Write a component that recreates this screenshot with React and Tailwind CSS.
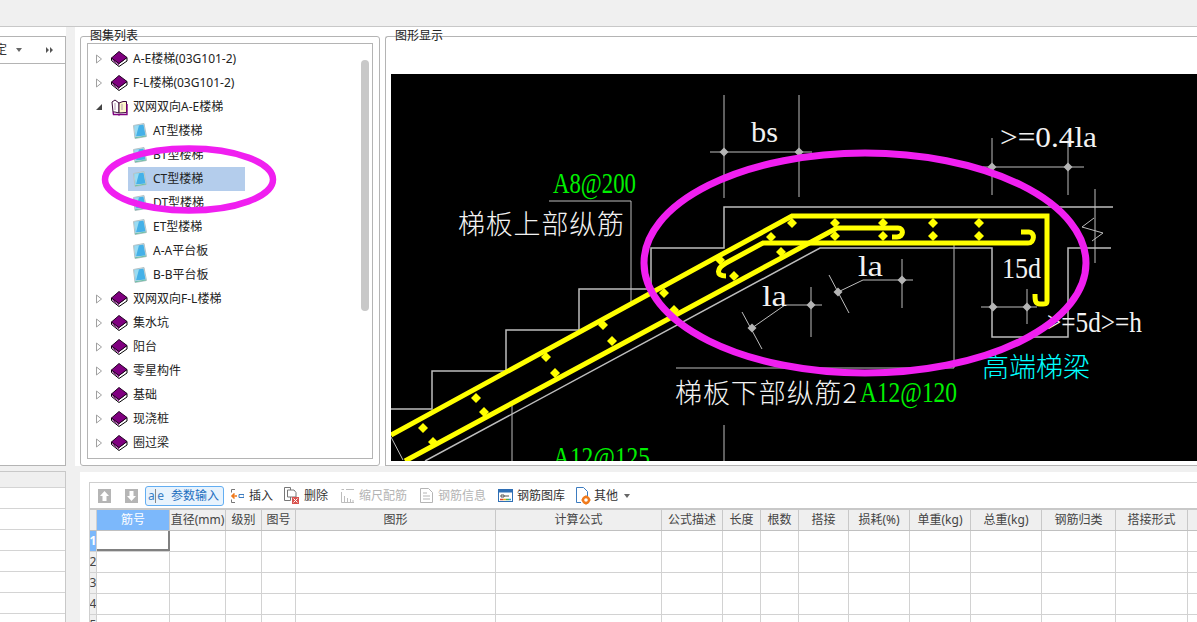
const UI_FONT = "font-['Noto_Sans','Noto_Sans_CJK_SC',sans-serif]";

const TREE = [
  { label: "A-E楼梯(03G101-2)", type: "book" },
  { label: "F-L楼梯(03G101-2)", type: "book" },
  { label: "双网双向A-E楼梯", type: "open" },
  { label: "AT型楼梯", type: "leaf" },
  { label: "BT型楼梯", type: "leaf" },
  { label: "CT型楼梯", type: "leaf", selected: true },
  { label: "DT型楼梯", type: "leaf" },
  { label: "ET型楼梯", type: "leaf" },
  { label: "A-A平台板", type: "leaf" },
  { label: "B-B平台板", type: "leaf" },
  { label: "双网双向F-L楼梯", type: "book" },
  { label: "集水坑", type: "book" },
  { label: "阳台", type: "book" },
  { label: "零星构件", type: "book" },
  { label: "基础", type: "book" },
  { label: "现浇桩", type: "book" },
  { label: "圈过梁", type: "book" },
];

const COLUMNS = [
  { label: "筋号", width: 73, active: true },
  { label: "直径(mm)", width: 56 },
  { label: "级别", width: 36 },
  { label: "图号", width: 34 },
  { label: "图形", width: 200 },
  { label: "计算公式", width: 166 },
  { label: "公式描述", width: 61 },
  { label: "长度", width: 38 },
  { label: "根数", width: 38 },
  { label: "搭接", width: 50 },
  { label: "损耗(%)", width: 61 },
  { label: "单重(kg)", width: 61 },
  { label: "总重(kg)", width: 71 },
  { label: "钢筋归类", width: 74 },
  { label: "搭接形式", width: 72 },
  { label: "", width: 30 },
];

const DIAMONDS = [
  [835, 223], [835, 236], [883, 223], [883, 236], [933, 223], [933, 236], [979, 223], [979, 236],
  [792, 223], [771, 237], [781, 252], [734, 276], [720, 260], [664, 293], [674, 310], [603, 325],
  [612, 341], [546, 357], [555, 373], [476, 398], [484, 412], [423, 428], [433, 442],
];

const DIM_DOTS = [
  [724, 152], [799, 152], [992, 167], [1068, 167], [902, 280], [838, 292], [811, 305], [752, 328], [993, 307], [1027, 307],
];

const DIM_LINES = [
  "M724 95V198M799 95V197M710 152H812",
  "M992 138V195M1068 138V195M983 167H1084",
  "M1095 189V263M1094 218L1082 227L1103 233L1092 241",
  "M902 259V308M913 280H863L838 292M829 275L849 313",
  "M811 287V337M822 305H785L752 328M742 312L762 349",
  "M981 307H1037M1027 289V324",
  "M549 201H631V303M954 242V368H676",
  "M512 405V461M724 425V461M391 437L403 460",
];

const BookIcon = () => (
  <svg width="17" height="16" viewBox="0 0 17 16" className="shrink-0">
    <path d="M0.5 9.5L8 15.5L16 10V6.5L8 12.5L0.5 7Z" fill="#fff" stroke="#000" />
    <path d="M0.5 7L8 0.5L16 6.5L8 12.5Z" fill="#800080" stroke="#200020" />
    <path d="M1.5 9L8 14" stroke="#800080" />
  </svg>
);

const OpenBookIcon = () => (
  <svg width="17" height="17" viewBox="0 0 17 17" className="shrink-0">
    <path d="M1 3L4 1L8 4V14L4 13L2 13Z" fill="#fff" stroke="#3a0a3a" />
    <path d="M8 4L12 2.5H15.5V13.5L8 14Z" fill="#fbf6c8" stroke="#3a0a3a" />
    <path d="M2 13L2.5 15.5H7L8 16L9 15.5H16V5" fill="none" stroke="#800080" strokeWidth="1.4" />
    <path d="M4 4V11M11 5V11" stroke="#b59ab5" />
  </svg>
);

const LeafIcon = () => (
  <svg width="14" height="16" viewBox="0 0 14 16" className="shrink-0">
    <path d="M0.5 2.5L11 0.5L13.5 13.5L2 15.5Z" fill="#d8e2e4" stroke="#b4c2c4" />
    <path d="M1.5 3L10.5 1.5L12.5 12.5L2.5 13.5Z" fill="#45b1e8" />
    <path d="M1.5 3L6 2.3L3 13.4H2.5Z" fill="#9adcf2" />
    <path d="M2 14.8L13 13" stroke="#6cc0a8" />
  </svg>
);

const TreeRow = ({ item }) => {
  const isLeaf = item.type === "leaf";
  return (
    <div className={`flex h-6 items-center ${isLeaf ? "pl-[45px]" : "pl-[7px]"}`}>
      {!isLeaf && (
        <svg width="8" height="10" viewBox="0 0 8 10" className="mr-[8px] shrink-0">
          {item.type === "open" ? (
            <path d="M1 8L7 8V2Z" fill="#444" />
          ) : (
            <path d="M1.5 1L6.5 5L1.5 9Z" fill="#fff" stroke="#a0a0a0" />
          )}
        </svg>
      )}
      <div className={`flex h-6 items-center ${item.selected ? "bg-[#b4cdec] w-[117px] pl-[5px] -ml-[5px]" : ""}`}>
        {item.type === "book" && <BookIcon />}
        {item.type === "open" && <OpenBookIcon />}
        {isLeaf && <LeafIcon />}
        <span className={`whitespace-nowrap text-[12px] text-[#222] ${isLeaf ? "ml-[6px]" : "ml-[5px]"}`}>{item.label}</span>
      </div>
    </div>
  );
};

const ToolbarIcon = ({ kind }) => {
  if (kind === "up" || kind === "down") {
    return (
      <svg width="13" height="14" viewBox="0 0 13 14">
        <rect width="13" height="14" fill="#b5b5b5" />
        <path d={kind === "up" ? "M6.5 2L11 7H8.5V12H4.5V7H2Z" : "M6.5 12L11 7H8.5V2H4.5V7H2Z"} fill="#fff" />
      </svg>
    );
  }
  if (kind === "param") {
    return (
      <span className="flex w-[16px] items-center justify-between text-[12px] leading-none text-[#3a7fc4]">
        <span>a</span>
        <span className="h-[14px] w-px bg-[#888]" />
        <span>e</span>
      </span>
    );
  }
  if (kind === "insert") {
    return (
      <svg width="14" height="16" viewBox="0 0 14 16" fill="none">
        <path d="M5 1.5H1.5V4.5M1.5 11.5V14.5H5" stroke="#777" />
        <path d="M7 8H2M4.5 5.5L2 8L4.5 10.5" stroke="#f07a1c" strokeWidth="1.6" />
        <path d="M9 6.5H14V9.5H9Z" stroke="#3d7cc0" />
      </svg>
    );
  }
  if (kind === "delete") {
    return (
      <svg width="15" height="17" viewBox="0 0 15 17" fill="none">
        <path d="M0.5 0.5H6.5V13.5H0.5Z" fill="#fff" stroke="#777" />
        <path d="M3.5 3H10L12 5.5V10H3.5Z" fill="#fff" stroke="#777" />
        <rect x="8" y="10" width="7" height="7" fill="#d9534f" />
        <path d="M9.5 11.5L13.5 15.5M13.5 11.5L9.5 15.5" stroke="#fff" />
      </svg>
    );
  }
  if (kind === "scale") {
    return (
      <svg width="14" height="14" viewBox="0 0 14 14" fill="none" stroke="#bdbdbd">
        <path d="M0.5 0.5H3M5 0.5H13M0.5 3V13.5H13" />
        <path d="M3.5 7V13M6.5 9V13M9.5 10V13M12 11V13" />
      </svg>
    );
  }
  if (kind === "info") {
    return (
      <svg width="13" height="15" viewBox="0 0 13 15" fill="none" stroke="#b5b5b5">
        <path d="M0.5 0.5H8.5L12.5 4.5V14.5H0.5Z" />
        <path d="M3 5H7M3 8H10M3 11H10" />
      </svg>
    );
  }
  if (kind === "library") {
    return (
      <svg width="15" height="13" viewBox="0 0 15 13" fill="none">
        <rect x="0.5" y="0.5" width="14" height="12" fill="#fff" stroke="#2f6fb5" />
        <rect x="0.5" y="0.5" width="14" height="3" fill="#2f6fb5" />
        <path d="M3 6H6V8H3ZM6 7H11" stroke="#555" />
        <path d="M2 10.5H5" stroke="#e0453a" strokeWidth="1.5" />
        <path d="M5 10.5H8" stroke="#e8b021" strokeWidth="1.5" />
        <path d="M8 10.5H11" stroke="#4caf50" strokeWidth="1.5" />
        <path d="M11 10.5H13" stroke="#2f9ed8" strokeWidth="1.5" />
      </svg>
    );
  }
  return (
    <svg width="15" height="18" viewBox="0 0 15 18" fill="none">
      <path d="M0.5 0.5H7.5L11.5 4.5V10M5 15.5H0.5V0.5" stroke="#3d7cc0" />
      <circle cx="10" cy="13" r="3" stroke="#f07a1c" strokeWidth="2.4" />
      <path d="M10 8.5V10M10 16V17.5M5.5 13H7M13 13H14.5" stroke="#f07a1c" strokeWidth="1.6" />
    </svg>
  );
};

const ToolbarButton = ({ kind, label, disabled, active, width, gap, caret }) => (
  <div
    className={`flex h-[20px] shrink-0 items-center rounded-[3px] border ${active ? "border-[#63aef2] bg-[#e8f3fd]" : "border-transparent"}`}
    style={{ width }}
  >
    <span className="flex w-[20px] shrink-0 justify-center">
      <ToolbarIcon kind={kind} />
    </span>
    {label && (
      <span
        className={`whitespace-nowrap text-[12px] ${disabled ? "text-[#b4b4b4]" : active ? "text-[#1f6fbf]" : "text-[#333]"}`}
        style={{ marginLeft: gap }}
      >
        {label}
      </span>
    )}
    {caret && <span className="ml-[6px] h-0 w-0 border-x-[3.5px] border-t-[4px] border-x-transparent border-t-[#666]" />}
  </div>
);

const DrawingCanvas = () => (
  <svg viewBox="391 74 806 387" width="806" height="387" className="block bg-black">
    {/* outline of stair and beam */}
    <g fill="none" stroke="#bdbdbd" strokeWidth="1.5">
      <path d="M391 409H432V371H506V330H579V289H651V248H724V207H1113" />
      <path d="M425 461L820 248H992V337H1068V248H1111" />
    </g>
    <g fill="none" stroke="#bdbdbd" strokeWidth="1">
      {DIM_LINES.map((d) => (
        <path key={d} d={d} />
      ))}
    </g>
    {DIM_DOTS.map(([x, y]) => (
      <path key={`${x}-${y}`} d={`M${x} ${y - 4.5}L${x + 4.5} ${y}L${x} ${y + 4.5}L${x - 4.5} ${y}Z`} fill="#b4b4b4" />
    ))}

    {/* rebar */}
    <g fill="none" stroke="#ffff00" strokeWidth="5">
      <path d="M391 435L792 216H1047V301C1047 305 1044 304 1040 304C1035 304 1035 300 1035 294" />
      <path d="M405 461L837 228H898C904 228 904 237 897 237H892" />
      <path d="M1021 232H1029C1035 232 1035 243 1028 243H763L726 263C717 268 715 276 726 276" />
    </g>
    {DIAMONDS.map(([x, y]) => (
      <path key={`${x}-${y}`} d={`M${x} ${y - 5}L${x + 5} ${y}L${x} ${y + 5}L${x - 5} ${y}Z`} fill="#ffff00" />
    ))}

    {/* labels */}
    <g className="font-['Liberation_Serif',serif]" fontSize="29" fill="#f2f2f2">
      <text x="751" y="142" textLength="27" lengthAdjust="spacingAndGlyphs">bs</text>
      <text x="1000" y="147" textLength="97" lengthAdjust="spacingAndGlyphs">&gt;=0.4la</text>
      <text x="858" y="276" textLength="25" lengthAdjust="spacingAndGlyphs">la</text>
      <text x="762" y="306" textLength="25" lengthAdjust="spacingAndGlyphs">la</text>
      <text x="1002" y="278" textLength="39" lengthAdjust="spacingAndGlyphs">15d</text>
      <text x="1047" y="332" textLength="95" lengthAdjust="spacingAndGlyphs">&gt;=5d&gt;=h</text>
      <text x="553" y="193" textLength="83" lengthAdjust="spacingAndGlyphs" fill="#00f000">A8@200</text>
      <text x="860" y="402" textLength="97" lengthAdjust="spacingAndGlyphs" fill="#00f000">A12@120</text>
      <text x="553" y="467" textLength="97" lengthAdjust="spacingAndGlyphs" fill="#00f000">A12@125</text>
    </g>
    <g className="font-['Noto_Sans_CJK_SC',sans-serif]" fontSize="27" fontWeight="300" fill="#f2f2f2">
      <text x="458" y="234" textLength="166">梯板上部纵筋</text>
      <text x="675" y="403" textLength="182">梯板下部纵筋2</text>
      <text x="982" y="377" textLength="108" fill="#00ffff">高端梯梁</text>
    </g>

    <ellipse cx="865" cy="263" rx="221" ry="110" fill="none" stroke="#f01ff0" strokeWidth="7" />
  </svg>
);

const LeftPanels = () => (
  <div className="flex w-[66px] shrink-0 flex-col">
    <div className="h-[9px] bg-white" />
    <div className="flex h-[430px] flex-col border-y border-r border-[#b4b4b4] bg-white">
      <div className="flex h-[27px] items-center border-b border-[#b4b4b4] text-[12px] text-[#333]">
        <span className="ml-[-5px]">定</span>
        <span className="ml-[9px] h-0 w-0 border-x-[3.5px] border-t-[4px] border-x-transparent border-t-[#666]" />
        <svg width="7" height="6" viewBox="0 0 7 6" className="ml-[24px]">
          <path d="M0 0L3 3L0 6ZM4 0L7 3L4 6Z" fill="#555" />
        </svg>
      </div>
    </div>
    <div className="h-[5px]" />
    <div className="flex-1 border-r border-t border-[#c8c8c8] bg-white">
      <div className="h-[16px] border-b border-[#d4d4d4] bg-[#efefef]" />
      {[0, 1, 2, 3, 4, 5].map((row) => (
        <div key={row} className="h-[21px] border-b border-[#d4d4d4]" />
      ))}
    </div>
  </div>
);

const TreePanel = () => (
  <div className="relative h-[430px] w-[300px] shrink-0 rounded-[3px] border border-[#b4b4b4] p-[6px]">
    <span className="absolute left-[9px] top-[-9px] text-[12px] leading-[16px] text-[#222]">图集列表</span>
    <div className="flex h-[416px] border border-[#b4b4b4] bg-white">
      <div className="flex-1 pt-[3px]">
        {TREE.map((item) => (
          <TreeRow key={item.label} item={item} />
        ))}
      </div>
      <div className="w-[8px] shrink-0 pt-[16px] mr-[3px]">
        <div className="h-[251px] rounded-full bg-[#c8c8c8]" />
      </div>
    </div>
  </div>
);

const DrawingPanel = () => (
  <div className="relative ml-[5px] h-[430px] min-w-0 flex-1 rounded-tl-[3px] border-l border-t border-b border-[#b4b4b4]">
    <span className="absolute left-[9px] top-[-9px] text-[12px] leading-[16px] text-[#222]">图形显示</span>
    <div className="ml-[5px] mt-[37px]">
      <DrawingCanvas />
    </div>
  </div>
);

const RebarTable = () => (
  <div className="ml-[9px] mt-[10px] border-t border-l border-[#cfcfcf]">
    <div className="flex h-[27px] items-center border-b-[2px] border-[#c8c8c8] bg-white pl-[3px]">
      <ToolbarButton kind="up" width={27} />
      <ToolbarButton kind="down" width={25} />
      <ToolbarButton kind="param" label="参数输入" active width={79} gap={5} />
      <span className="w-[2px]" />
      <ToolbarButton kind="insert" label="插入" width={54} gap={2} />
      <ToolbarButton kind="delete" label="删除" width={57} gap={3} />
      <ToolbarButton kind="scale" label="缩尺配筋" disabled width={78} gap={1} />
      <ToolbarButton kind="info" label="钢筋信息" disabled width={79} gap={2} />
      <ToolbarButton kind="library" label="钢筋图库" width={78} gap={2} />
      <ToolbarButton kind="other" label="其他" width={90} gap={1} caret />
    </div>
    <div className="flex h-[21px] border-b-[1px] border-[#c0c0c0] bg-[#efefef]">
      <div className="w-[7px] shrink-0 border-r border-[#d0d0d0]" />
      {COLUMNS.map((col, i) => (
        <div
          key={i}
          className={`flex shrink-0 items-center justify-center whitespace-nowrap border-r border-[#c8c8c8] text-[12px] ${col.active ? "bg-[#7cb8fb] text-white" : "text-[#444]"}`}
          style={{ width: col.width }}
        >
          {col.label}
        </div>
      ))}
    </div>
    {[1, 2, 3, 4, 5].map((row) => (
      <div key={row} className="flex h-[21px] border-b border-[#d2d2d2] bg-white">
        <div
          className={`flex w-[7px] shrink-0 items-center justify-center overflow-hidden border-r border-[#d0d0d0] text-[12px] font-bold ${row === 1 ? "bg-[#7cb8fb] text-white" : "bg-[#efefef] font-normal text-[#444]"}`}
        >
          {row}
        </div>
        {COLUMNS.map((col, i) => (
          <div
            key={i}
            className={`shrink-0 border-r border-[#d2d2d2] ${row === 1 && i === 0 ? "border-b-[2px] border-r-[2px] border-b-[#808080] border-r-[#808080]" : ""}`}
            style={{ width: col.width }}
          />
        ))}
      </div>
    ))}
  </div>
);

export default function App() {
  return (
    <div className={`relative flex h-[622px] w-[1197px] flex-col overflow-hidden bg-[#f0f0f0] ${UI_FONT}`}>
      <div className="h-[27px] shrink-0 border-b border-[#c8c8c8] bg-[#f0f0f0]" />
      <div className="flex min-h-0 flex-1">
        <LeftPanels />
        <div className="w-[9px] shrink-0" />
        <div className="flex min-w-0 flex-1 flex-col">
          <div className="flex h-[439px] shrink-0 bg-white pl-[5px] pt-[9px]">
            <TreePanel />
            <DrawingPanel />
          </div>
          <div className="h-[6px] shrink-0" />
          <div className="ml-[5px] min-h-0 flex-1 overflow-hidden bg-white">
            <RebarTable />
          </div>
        </div>
      </div>
      {/* hand drawn mark over the tree */}
      <svg width="190" height="80" viewBox="95 140 190 80" className="pointer-events-none absolute left-[95px] top-[140px]">
        <ellipse cx="189" cy="179.5" rx="84" ry="31" fill="none" stroke="#f01ff0" strokeWidth="6.5" />
      </svg>
    </div>
  );
}
